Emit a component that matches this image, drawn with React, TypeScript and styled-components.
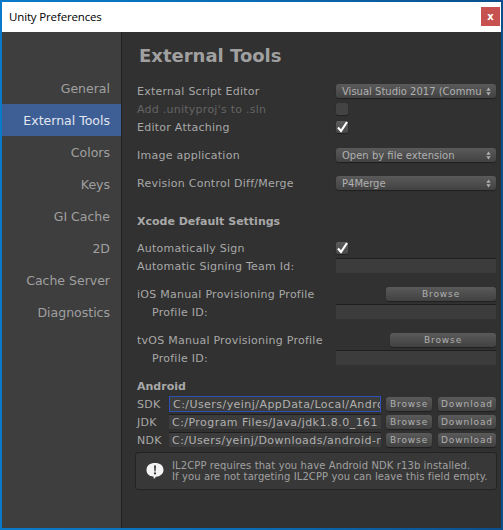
import React from 'react';
import styled, { createGlobalStyle } from 'styled-components';

const GlobalStyle = createGlobalStyle`
  html, body {
    margin: 0;
    padding: 0;
    background: #0a5a9c;
  }
  * {
    box-sizing: border-box;
  }
`;

const Desktop = styled.div`
  width: 503px;
  height: 530px;
  padding: 2px 2px 2px 2px;
  overflow: hidden;
  background: linear-gradient(90deg, #0a7ac8 0%, #0a6cb4 50%, #0b4f8c 100%);
  font-family: 'DejaVu Sans', sans-serif;
`;

const Window = styled.div`
  width: 499px;
  height: 526px;
  display: flex;
  flex-direction: column;
`;

const TitleBar = styled.div`
  height: 30px;
  flex: none;
  background: #fff;
  display: flex;
  align-items: center;
  justify-content: space-between;
  padding: 0 1px 1px 7px;
  font-family: 'Open Sans', sans-serif;
  font-size: 11.5px;
  letter-spacing: -0.15px;
  color: #000;
`;

const CloseButton = styled.div`
  width: 19px;
  height: 19px;
  background: #c75050;
  color: #fff;
  font-family: 'DejaVu Sans', sans-serif;
  font-size: 10px;
  font-weight: bold;
  display: flex;
  align-items: center;
  justify-content: center;
`;

const Body = styled.div`
  flex: 1;
  display: flex;
  min-height: 0;
`;

const Sidebar = styled.div`
  width: 120px;
  flex: none;
  padding-top: 40px;
  background: #3e3e3e;
  border-right: 1px solid #222;
`;

const NavItem = styled.div<{ $active?: boolean }>`
  height: 32px;
  display: flex;
  align-items: center;
  justify-content: flex-end;
  padding-right: 11px;
  font-size: 12.5px;
  color: ${p => (p.$active ? '#e2e6ee' : '#a0a0a0')};
  background: ${p => (p.$active ? '#3d5f96' : 'transparent')};
`;

const Main = styled.div`
  flex: 1;
  min-width: 0;
  padding: 0 5px 0 15px;
  background: #313131;
  color: #a8a8a8;
  font-size: 11px;
  letter-spacing: 0.25px;
`;

const PageTitle = styled.h1`
  height: 50px;
  margin: 0;
  padding: 0 0 4px 2px;
  display: flex;
  align-items: center;
  font-size: 18px;
  font-weight: bold;
  letter-spacing: 0;
  color: #a0a0a0;
`;

const Row = styled.div<{ $top?: number }>`
  height: 18px;
  margin-top: ${p => p.$top ?? 0}px;
  display: flex;
  align-items: center;
`;

const Label = styled.div<{ $disabled?: boolean; $indent?: boolean }>`
  width: 199px;
  flex: none;
  padding-left: ${p => (p.$indent ? 15 : 0)}px;
  white-space: nowrap;
  color: ${p => (p.$disabled ? '#646464' : '#a8a8a8')};
`;

const SectionTitle = styled.div<{ $top: number }>`
  height: 18px;
  margin-top: ${p => p.$top}px;
  display: flex;
  align-items: center;
  font-size: 11px;
  font-weight: bold;
  letter-spacing: 0;
  color: #a8a8a8;
`;

const Select = styled.div`
  width: 160px;
  height: 14px;
  padding: 0 5px 0 6px;
  display: flex;
  align-items: center;
  justify-content: space-between;
  border-radius: 3px;
  background: linear-gradient(#5a5a5a, #424242);
  box-shadow: 0 1px 1px #202020;
  color: #b0b0b0;
  font-size: 10px;
  letter-spacing: 0;
  white-space: nowrap;
  overflow: hidden;
`;

const CheckBox = styled.div<{ $dim?: boolean }>`
  width: 12px;
  height: 12px;
  display: flex;
  align-items: center;
  justify-content: center;
  border-radius: 2px;
  background: ${p => (p.$dim ? '#434343' : 'linear-gradient(#5c5c5c, #484848)')};
  box-shadow: 0 1px 1px #222;
`;

const TextField = styled.div`
  width: 160px;
  height: 14px;
  background: #3c3c3c;
  box-shadow: 0 -1px 0 #1e1e1e;
`;

const Button = styled.div<{ $width: number; $push?: boolean }>`
  width: ${p => p.$width}px;
  height: 14px;
  flex: none;
  margin-left: ${p => (p.$push ? 'auto' : '0')};
  display: flex;
  align-items: center;
  justify-content: center;
  border-radius: 3px;
  background: linear-gradient(#5a5a5a, #414141);
  box-shadow: 0 1px 1px #202020;
  color: #b0b0b0;
  font-size: 9px;
  letter-spacing: 0.9px;
`;

const SdkLabel = styled.div`
  width: 32px;
  flex: none;
`;

const PathField = styled.div<{ $focused?: boolean }>`
  width: 212px;
  height: ${p => (p.$focused ? 16 : 14)}px;
  flex: none;
  margin-right: 5px;
  padding-left: 3px;
  display: flex;
  align-items: center;
  background: #3c3c3c;
  box-shadow: ${p => (p.$focused ? 'none' : '0 -1px 0 #1e1e1e')};
  border: ${p => (p.$focused ? '1px solid #2c50b4' : 'none')};
  color: #b0b0b0;
  letter-spacing: 0.45px;
  white-space: nowrap;
  overflow: hidden;
`;

const DownloadButton = styled(Button)`
  margin-left: 6px;
`;

const HelpBox = styled.div`
  width: 362px;
  height: 38px;
  margin: 3px 0 0 -2px;
  padding-left: 10px;
  display: flex;
  align-items: center;
  gap: 8px;
  border: 1px solid #232323;
  border-radius: 3px;
  background: #383838;
`;

const HelpText = styled.div`
  font-size: 10px;
  line-height: 11px;
  letter-spacing: 0.1px;
  white-space: nowrap;
  color: #a0a0a0;
`;

const Check = () => (
  <svg width="12" height="12" viewBox="0 0 12 12">
    <path d="M2 6.5 L5 10 L11 1" fill="none" stroke="#fff" strokeWidth="2.2" />
  </svg>
);

const UpDown = () => (
  <svg width="5" height="9" viewBox="0 0 5 9" style={{ flex: 'none' }}>
    <path d="M2.5 0.5 L4.7 3.7 H0.3 Z M2.5 8.5 L4.7 5.3 H0.3 Z" fill="#b0b0b0" />
  </svg>
);

const InfoIcon = () => (
  <svg width="18" height="18" viewBox="0 0 18 18" style={{ flex: 'none' }}>
    <path d="M9 1 C14 1 17.5 3.6 17.5 8 C17.5 12 14 14.5 10 14.7 L8 17 L7.4 14.6 C3.6 14.2 0.5 12 0.5 8 C0.5 3.6 4 1 9 1 Z" fill="#f4f4f4" />
    <path d="M8 3.5 H10 L9.6 9.5 H8.4 Z" fill="#333" />
    <circle cx="9" cy="11.4" r="1.1" fill="#333" />
  </svg>
);

const navItems = ['General', 'External Tools', 'Colors', 'Keys', 'GI Cache', '2D', 'Cache Server', 'Diagnostics'];

const sdks = [
  { label: 'SDK', path: 'C:/Users/yeinj/AppData/Local/Andro', focused: true },
  { label: 'JDK', path: 'C:/Program Files/Java/jdk1.8.0_161' },
  { label: 'NDK', path: 'C:/Users/yeinj/Downloads/android-n' },
];

export default function App() {
  return (
    <Desktop>
      <GlobalStyle />
      <Window>
        <TitleBar>
          Unity Preferences
          <CloseButton>x</CloseButton>
        </TitleBar>
        <Body>
          <Sidebar>
            {navItems.map(item => (
              <NavItem key={item} $active={item === 'External Tools'}>{item}</NavItem>
            ))}
          </Sidebar>
          <Main>
            <PageTitle>External Tools</PageTitle>
            <Row>
              <Label>External Script Editor</Label>
              <Select>Visual Studio 2017 (Commu<UpDown /></Select>
            </Row>
            <Row>
              <Label $disabled>Add .unityproj's to .sln</Label>
              <CheckBox $dim />
            </Row>
            <Row>
              <Label>Editor Attaching</Label>
              <CheckBox><Check /></CheckBox>
            </Row>
            <Row $top={10}>
              <Label>Image application</Label>
              <Select>Open by file extension<UpDown /></Select>
            </Row>
            <Row $top={10}>
              <Label>Revision Control Diff/Merge</Label>
              <Select>P4Merge<UpDown /></Select>
            </Row>

            <SectionTitle $top={20}>Xcode Default Settings</SectionTitle>
            <Row $top={9}>
              <Label>Automatically Sign</Label>
              <CheckBox><Check /></CheckBox>
            </Row>
            <Row>
              <Label>Automatic Signing Team Id:</Label>
              <TextField />
            </Row>
            <Row $top={10}>
              <Label>iOS Manual Provisioning Profile</Label>
              <Button $width={110} $push>Browse</Button>
            </Row>
            <Row>
              <Label $indent>Profile ID:</Label>
              <TextField />
            </Row>
            <Row $top={10}>
              <Label>tvOS Manual Provisioning Profile</Label>
              <Button $width={106} $push>Browse</Button>
            </Row>
            <Row>
              <Label $indent>Profile ID:</Label>
              <TextField />
            </Row>

            <SectionTitle $top={10}>Android</SectionTitle>
            {sdks.map(sdk => (
              <Row key={sdk.label}>
                <SdkLabel>{sdk.label}</SdkLabel>
                <PathField $focused={sdk.focused}>{sdk.path}</PathField>
                <Button $width={46}>Browse</Button>
                <DownloadButton $width={58}>Download</DownloadButton>
              </Row>
            ))}
            <HelpBox>
              <InfoIcon />
              <HelpText>
                IL2CPP requires that you have Android NDK r13b installed.
                <br />
                If you are not targeting IL2CPP you can leave this field empty.
              </HelpText>
            </HelpBox>
          </Main>
        </Body>
      </Window>
    </Desktop>
  );
}
